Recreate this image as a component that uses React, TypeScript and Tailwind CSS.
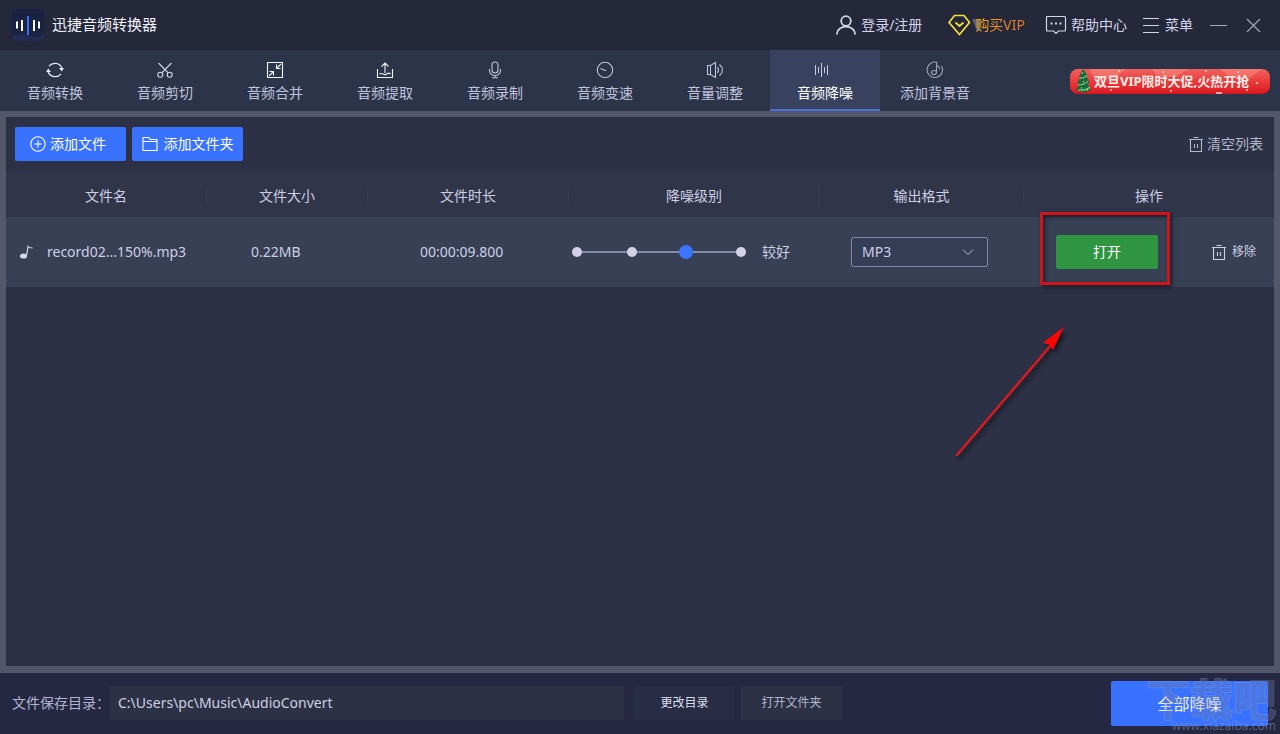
import { useState } from "react";
import type { ReactNode } from "react";

function Logo() {
  return (
    <svg viewBox="0 0 32 32" className="size-8" aria-hidden="true">
      <rect width="32" height="32" rx="5" fill="#1b2343" />
      <path d="M0 27 Q10 23 18 27 T32 24 V27 Q32 32 27 32 H5 Q0 32 0 27Z" fill="#222d57" />
      <path d="M5 12.500V19.500M10 11V22M22 11V22M27 12.500V19.500" stroke="#fff" strokeWidth="2" />
      <path d="M16 7V26" stroke="#3c6cf0" strokeWidth="2" />
    </svg>
  );
}

function Icon({ children, className = "size-[18px]", size = 18 }: { children: ReactNode; className?: string; size?: number }) {
  return (
    <svg
      viewBox={`0 0 ${size} ${size}`}
      className={className}
      fill="none"
      stroke="currentColor"
      strokeWidth="1.1"
      aria-hidden="true"
    >
      {children}
    </svg>
  );
}

const TrashIcon = () => (
  <Icon className="size-4" size={16}>
    <path d="M1 3.500H15M5.500 1.500H10.500M2.500 3.500V15.500H13.500V3.500M6.500 8V12M9.500 8V12" />
  </Icon>
);

const tabs: { label: string; icon: ReactNode }[] = [
  {
    label: "音频转换",
    icon: (
      <Icon className="size-[18px] text-[#e4e6f2]">
        <path d="M3 5.200A7.500 7.500 0 0 1 16 7.500M15 12.800A7.500 7.500 0 0 1 2 10.500" strokeWidth="1.300" />
        <path d="M13 7H18L15.800 10.500ZM0 11L2.200 7.500L5 11Z" fill="currentColor" stroke="none" />
      </Icon>
    ),
  },
  {
    label: "音频剪切",
    icon: (
      <Icon className="size-[18px] text-[#d6d8e8]">
        <path d="M2.500 2L12.500 12.200M15.500 2L5.500 12.200" />
        <circle cx="4.300" cy="13.800" r="2.500" />
        <circle cx="13.700" cy="13.800" r="2.500" />
      </Icon>
    ),
  },
  {
    label: "音频合并",
    icon: (
      <Icon className="size-[18px] text-[#f2f3fa]">
        <path d="M1.500 1.500H16.500V16.500H1.500Z" />
        <path d="M15 3L10.500 7.500M10.500 3.500V7.500H14.500M3 15L7.500 10.500M3.500 10.500H7.500V14.500" />
      </Icon>
    ),
  },
  {
    label: "音频提取",
    icon: (
      <Icon className="size-[18px] text-[#f2f3fa]">
        <path d="M1.500 8V16.500H16.500V8M9 12V2M5.500 5.500L9 2L12.500 5.500M3.500 13C6 11 7.500 14.500 10 13.500C12 11.500 13 11.500 14.500 13" />
      </Icon>
    ),
  },
  {
    label: "音频录制",
    icon: (
      <Icon>
        <rect x="6" y="1" width="6" height="11" rx="3" />
        <path d="M3.500 8V9.500A5.500 5 0 0 0 14.500 9.500V8M9 14.500V16.500M6 16.800H12" />
      </Icon>
    ),
  },
  {
    label: "音频变速",
    icon: (
      <Icon>
        <circle cx="9" cy="9" r="7.700" />
        <path d="M4.500 7.500L10 9.700" />
      </Icon>
    ),
  },
  {
    label: "音量调整",
    icon: (
      <Icon>
        <path d="M1.500 4.500H4.500L9.500 1.500V16.500L4.500 13.500H1.500ZM4.500 4.500V13.500M11.500 6Q13.500 9 11.500 12M13.500 3.500Q19.500 9 13.500 14.500" />
      </Icon>
    ),
  },
  {
    label: "音频降噪",
    icon: (
      <Icon className="size-[18px] overflow-visible text-[#c8cbe2]">
        <path d="M-0.500 4V14M2.500 6V12M5.500 2V16M8.500 6V12M11.500 4V14" strokeWidth="1" />
      </Icon>
    ),
  },
  {
    label: "添加背景音",
    icon: (
      <Icon className="size-[18px] text-[#9aa1b9]">
        <path d="M11.500 1.600A7.700 7.700 0 1 0 15.500 5M10.500 1V11.500M10.500 4.500Q13.500 5 13.500 8.500" />
        <ellipse cx="8" cy="11.500" rx="2.500" ry="2" />
      </Icon>
    ),
  },
];

function TitleBar() {
  return (
    <header className="flex h-[50px] shrink-0 items-center justify-between bg-[#25273a] pr-[19px] pb-px pl-3">
      <div className="flex items-center gap-2">
        <Logo />
        <h1 className="text-[15px] text-[#f0f2fa]">迅捷音频转换器</h1>
      </div>
      <div className="flex items-center text-sm text-[#d3d5ea]">
        <button type="button" className="flex items-center gap-1">
          <svg viewBox="0 0 22 20" className="h-5 w-[22px]" fill="none" stroke="currentColor" strokeWidth="1.800" aria-hidden="true">
            <circle cx="11" cy="6" r="4.800" />
            <path d="M2 19.500C2 9 20 9 20 19.500" />
          </svg>
          登录/注册
        </button>
        <button type="button" className="ml-[25px] flex items-center gap-1">
          <svg viewBox="0 0 24 22" className="h-[22px] w-6 overflow-visible" fill="none" stroke="#f3e13a" strokeWidth="1.700" aria-hidden="true">
            <path d="M7.500 1.500H17L22.500 8.500L12.500 20.500L2 8.500Z" />
            <path d="M8.500 8.500L12.500 12L16.500 8.500" />
            <path d="M25 5H33V17H30Z" fill="#5d6070" stroke="none" />
          </svg>
          <span className="relative bg-linear-to-r from-[#f5b01c] via-[#ee8c1e] to-[#e07a34] bg-clip-text text-transparent">购买VIP</span>
        </button>
        <button type="button" className="ml-5 flex items-center gap-1">
          <svg viewBox="0 0 22 20" className="h-5 w-[22px]" fill="none" stroke="currentColor" strokeWidth="1.200" aria-hidden="true">
            <path d="M2.500 1.500H19.500Q20.500 1.500 20.500 2.500V15Q20.500 16 19.500 16H13.500L11 18.500L8.500 16H2.500Q1.500 16 1.500 15V2.500Q1.500 1.500 2.500 1.500Z" />
            <path d="M5.500 8.500H7.500M10 8.500H12M14.500 8.500H16.500" strokeWidth="2" />
          </svg>
          帮助中心
        </button>
        <button type="button" className="ml-4 flex items-center gap-1.5">
          <svg viewBox="0 0 16 16" className="size-4" stroke="currentColor" aria-hidden="true">
            <path d="M0 1.500H16M0 8.500H16M0 15.500H16" />
          </svg>
          菜单
        </button>
        <button type="button" aria-label="最小化" className="ml-[17px]">
          <svg viewBox="0 0 18 18" className="size-[18px]" stroke="#a4a7ba" aria-hidden="true">
            <path d="M0 9.500H17" />
          </svg>
        </button>
        <button type="button" aria-label="关闭" className="ml-[18px]">
          <svg viewBox="0 0 15 15" className="size-[15px]" stroke="#a4a7ba" strokeWidth="1.200" aria-hidden="true">
            <path d="M1 2L14 15M14 2L1 15" />
          </svg>
        </button>
      </div>
    </header>
  );
}

function PromoBanner() {
  return (
    <a
      href="#vip"
      className="relative mt-0.5 mr-2.5 flex h-[25px] w-[200px] items-center overflow-hidden rounded-lg bg-linear-to-b from-[#f0605c] via-[#e93a3c] to-[#d9141c] pl-1 text-[13px] font-bold whitespace-nowrap text-[#ffeeea]"
    >
      <svg viewBox="0 0 200 25" className="absolute inset-0 h-full w-full" aria-hidden="true">
        <path d="M20 0H55L45 10H24ZM82 0H118L106 8H88ZM150 0H192L180 9H160Z" fill="#ff9a8e" fillOpacity="0.4" />
        <path d="M48 2h2M92 3h2M135 2h2M167 3h2M40 21h2M100 22h2M146 24h6M186 14h2M176 21h2" stroke="#ffd5cc" strokeWidth="1.500" />
      </svg>
      <svg viewBox="0 0 20 25" className="relative h-[25px] w-5 shrink-0" aria-hidden="true">
        <path d="M9 0L14 7L12 7L16 14L13 14L17 21L10 24L2 21L5 15L3 14L7 8L5 8Z" fill="#176b42" />
        <path d="M6 9Q10 10 13 6M4 16Q11 16 14 12M4 21Q12 22 16 18" stroke="#79cf78" strokeWidth="1.200" fill="none" />
        <path d="M8 4h1M9 13h1M7 19h1M13 21h1" stroke="#ffd34d" strokeWidth="1.500" />
      </svg>
      <span className="relative">双旦VIP限时大促,火热开抢</span>
    </a>
  );
}

function NavBar() {
  const [active, setActive] = useState(7);
  return (
    <nav className="flex h-[61px] shrink-0 items-center justify-between bg-[#2c3449]">
      <div className="flex h-full">
        {tabs.map((tab, i) => (
          <button
            key={tab.label}
            type="button"
            aria-current={i === active ? "page" : undefined}
            onClick={() => setActive(i)}
            className={
              i === active
                ? "flex w-[110px] flex-col items-center gap-1 border-b-2 border-[#4a70d8] bg-[#38415d] pt-[11px] text-sm text-white"
                : "flex w-[110px] flex-col items-center gap-1 border-b-2 border-transparent pt-[11px] text-sm text-[#c0c3de]"
            }
          >
            {tab.icon}
            {tab.label}
          </button>
        ))}
      </div>
      <PromoBanner />
    </nav>
  );
}

const levels = ["关闭", "一般", "较好", "最好"];

function LevelSlider() {
  const [level, setLevel] = useState(2);
  return (
    <div className="flex items-center gap-4 pl-1">
      <div className="relative flex h-[14px] w-[174px] items-center justify-between">
        <div className="absolute inset-x-1 top-1.5 h-0.5 bg-[#848ba9]" />
        {levels.map((name, i) => (
          <span key={name} className="relative flex w-2.5 justify-center">
            <span
              className={
                i === level
                  ? "size-[14px] shrink-0 rounded-full bg-[#3a74ff]"
                  : "size-2.5 shrink-0 rounded-full bg-[#d3d2e8]"
              }
            />
          </span>
        ))}
        <input
          type="range"
          aria-label="降噪级别"
          min={0}
          max={3}
          value={level}
          onChange={(e) => setLevel(Number(e.target.value))}
          className="absolute inset-0 w-full cursor-pointer opacity-0"
        />
      </div>
      <span>{levels[level]}</span>
    </div>
  );
}

function PointerArrow() {
  return (
    <svg
      viewBox="0 0 130 150"
      className="pointer-events-none absolute top-[85px] -left-[106px] h-[150px] w-[130px] max-w-none drop-shadow-[2px_3px_2px_rgba(0,0,0,0.6)]"
      aria-hidden="true"
    >
      <path d="M7 135L102 24" stroke="#d81a1e" strokeWidth="2.500" strokeLinecap="round" />
      <path d="M114 7L103 30L99.500 25L93 22.500Z" fill="#fb0606" />
    </svg>
  );
}

const columns = ["文件名", "文件大小", "文件时长", "降噪级别", "输出格式", "操作"];

function FileTable() {
  return (
    <table className="w-full table-fixed text-left text-sm text-[#cdcfe4]">
      <colgroup>
        <col className="w-[201px]" />
        <col className="w-[161px]" />
        <col className="w-[201px]" />
        <col className="w-[251px]" />
        <col className="w-[204px]" />
        <col className="w-[250px]" />
      </colgroup>
      <thead>
        <tr className="h-[45px] bg-[#31354a]">
          {columns.map((c) => (
            <th key={c} scope="col" className="p-0 pt-0.5 text-center font-normal">
              <div className={c === "操作" ? "leading-5" : "border-r border-[#383c50] leading-5"}>{c}</div>
            </th>
          ))}
        </tr>
      </thead>
      <tbody>
        <tr className="h-[70px] bg-[#384056]">
          <td className="p-0 pl-[13px]">
            <div className="flex items-center gap-3">
              <svg viewBox="0 0 16 16" className="size-4" fill="#d8d9ec" aria-hidden="true">
                <ellipse cx="4.500" cy="12" rx="3.500" ry="2.600" />
                <path d="M7.500 12L9 2.500Q10 4 13.500 4" fill="none" stroke="#d8d9ec" strokeWidth="1.200" />
              </svg>
              record02...150%.mp3
            </div>
          </td>
          <td className="p-0 pl-11">0.22MB</td>
          <td className="p-0 pl-[52px]">00:00:09.800</td>
          <td className="p-0">
            <div className="-ml-px">
              <LevelSlider />
            </div>
          </td>
          <td className="p-0 pl-[31px]">
            <div className="relative w-[137px]">
              <select
                aria-label="输出格式"
                defaultValue="MP3"
                className="h-[30px] w-full appearance-none rounded-xs border border-[#8088a2] bg-[#353d57] pl-2.5"
              >
                <option>MP3</option>
                <option>WAV</option>
                <option>FLAC</option>
              </select>
              <svg viewBox="0 0 12 8" className="pointer-events-none absolute top-[11px] right-3.5 h-2 w-3" fill="none" stroke="#b7bbd2" aria-hidden="true">
                <path d="M1 1.500L6 6.500L11 1.500" />
              </svg>
            </div>
          </td>
          <td className="p-0">
            <div className="flex items-center justify-between pr-[18px] pl-8">
              <div className="relative">
                <button type="button" className="block h-[34px] w-[102px] rounded-xs bg-[#2f9541] text-white">
                  打开
                </button>
                <div className="pointer-events-none absolute -top-[23px] -right-3 -bottom-4 -left-4 border-3 border-[#cf1519] shadow-[2px_2px_4px_rgba(0,0,0,0.6),inset_2px_2px_4px_rgba(0,0,0,0.5)]" />
                <PointerArrow />
              </div>
              <button type="button" className="flex items-center gap-[5px] text-xs">
                <TrashIcon />
                移除
              </button>
            </div>
          </td>
        </tr>
      </tbody>
    </table>
  );
}

function Toolbar() {
  return (
    <div className="flex h-[55px] items-center justify-between pr-[11px] pb-0.5 pl-[9px]">
      <div className="flex gap-1.5 text-sm text-white">
        <button type="button" className="flex h-[34px] w-[111px] items-center gap-1 rounded-xs bg-[#3872ff] pl-[15px]">
          <Icon className="size-4" size={16}>
            <circle cx="8" cy="8" r="7.200" />
            <path d="M8 4.500V11.500M4.500 8H11.500" />
          </Icon>
          添加文件
        </button>
        <button type="button" className="flex h-[34px] w-[111px] items-center justify-center gap-1.5 rounded-xs bg-[#3872ff]">
          <Icon className="size-4" size={16}>
            <path d="M1 14.500V1.500H6.500L8.500 3.500H15V14.500ZM1 5.500H15" />
          </Icon>
          添加文件夹
        </button>
      </div>
      <button type="button" className="flex items-center gap-[3px] text-sm text-[#b3b6cc]">
        <TrashIcon />
        清空列表
      </button>
    </div>
  );
}

function Footer() {
  return (
    <footer className="flex h-[61px] shrink-0 items-center justify-between bg-[#262843] px-3">
      <div className="flex min-w-0 flex-1 items-center pb-0.5">
        <label htmlFor="dir" className="w-[98px] shrink-0 text-sm whitespace-nowrap text-[#b3b5cf]">
          文件保存目录：
        </label>
        <input
          id="dir"
          type="text"
          defaultValue="C:\Users\pc\Music\AudioConvert"
          className="h-[34px] w-[514px] min-w-0 bg-[#2d3146] px-2 text-sm text-[#cdcfe2] outline-none"
        />
        <button type="button" className="ml-2.5 h-[34px] w-[101px] shrink-0 bg-[#282c45] text-xs text-[#dcdef0]">
          更改目录
        </button>
        <button type="button" className="ml-1.5 h-[34px] w-[101px] shrink-0 bg-[#2d3146] text-xs text-[#b0b3cc]">
          打开文件夹
        </button>
      </div>
      <div className="relative">
        <button type="button" className="block h-[45px] w-[157px] rounded-xs bg-[#3872ff] text-base text-white">
          全部降噪
        </button>
        <div className="pointer-events-none absolute top-0 -right-2 flex flex-col items-end whitespace-nowrap">
          <span className="text-[43px] leading-[38px] font-bold text-[#6f7ba8] opacity-35 [-webkit-text-stroke:2px_#8f9cc8] [paint-order:stroke_fill]">
            下载吧
          </span>
          <span className="text-xs leading-[14px] text-[#8d97b8]/50">www.xiazaiba.com</span>
        </div>
      </div>
    </footer>
  );
}

export default function App() {
  return (
    <div className="flex h-screen flex-col overflow-hidden bg-[#262843] font-['Noto_Sans','Noto_Sans_CJK_SC',sans-serif]">
      <TitleBar />
      <NavBar />
      <main className="min-h-0 flex-1 bg-[#52576b] px-1.5 pt-1.5 pb-[7px]">
        <div className="h-full bg-[#2c3145]">
          <Toolbar />
          <FileTable />
        </div>
      </main>
      <Footer />
    </div>
  );
}
